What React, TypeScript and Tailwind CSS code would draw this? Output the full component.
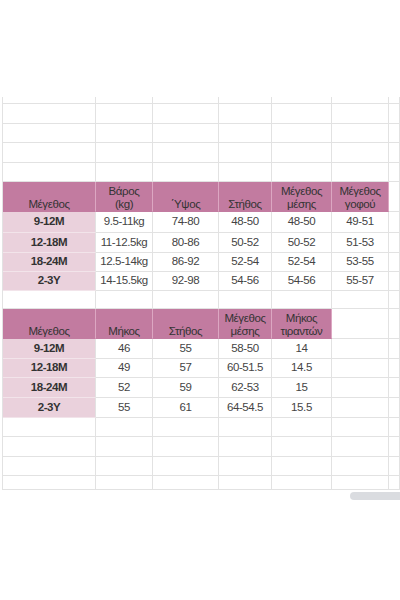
import React from 'react';

type Row = { h: number; kind: 'blank' | 'head' | 'data'; cells?: string[] };

// widths of the visible columns (x: 0,3,96,153,219,272,332,389,400)
const COLS = 'grid-cols-[3px_93px_57px_66px_53px_60px_57px_11px]';

const ROWS: Row[] = [
    { h: 7, kind: 'blank' },
    { h: 20, kind: 'blank' },
    { h: 19, kind: 'blank' },
    { h: 20, kind: 'blank' },
    { h: 19, kind: 'blank' },
    { h: 30, kind: 'head', cells: ['Μέγεθος', 'Βάρος\n(kg)', '΄Υψος', 'Στήθος', 'Μέγεθος\nμέσης', 'Μέγεθος\nγοφού'] },
    { h: 21, kind: 'data', cells: ['9-12M', '9.5-11kg', '74-80', '48-50', '48-50', '49-51'] },
    { h: 20, kind: 'data', cells: ['12-18M', '11-12.5kg', '80-86', '50-52', '50-52', '51-53'] },
    { h: 19, kind: 'data', cells: ['18-24M', '12.5-14kg', '86-92', '52-54', '52-54', '53-55'] },
    { h: 19, kind: 'data', cells: ['2-3Y', '14-15.5kg', '92-98', '54-56', '54-56', '55-57'] },
    { h: 18, kind: 'blank' },
    { h: 30, kind: 'head', cells: ['Μέγεθος', 'Μήκος', 'Στήθος', 'Μέγεθος\nμέσης', 'Μήκος\nτιραντών'] },
    { h: 20, kind: 'data', cells: ['9-12M', '46', '55', '58-50', '14'] },
    { h: 19, kind: 'data', cells: ['12-18M', '49', '57', '60-51.5', '14.5'] },
    { h: 20, kind: 'data', cells: ['18-24M', '52', '59', '62-53', '15'] },
    { h: 20, kind: 'data', cells: ['2-3Y', '55', '61', '64-54.5', '15.5'] },
    { h: 19, kind: 'blank' },
    { h: 20, kind: 'blank' },
    { h: 19, kind: 'blank' },
    { h: 14, kind: 'blank' },
];

function Cell({ kind, text, first }: { kind: 'blank' | 'head' | 'data'; text?: string; first?: boolean }) {
    if (kind === 'head' && text !== undefined) {
        return (
            <div className="flex items-end justify-center border-r border-b border-r-[#dca7c2] border-b-[#c27ba0] bg-[#c27ba0] text-center leading-[13px] whitespace-pre text-[#333]">
                {text}
            </div>
        );
    }
    if (kind === 'data' && text !== undefined) {
        if (first) {
            return (
                <div className="flex items-center justify-center border-r border-b border-r-[#e2e2e2] border-b-[#f2e4ea] bg-[#ead1dc] font-bold text-[#333]">
                    {text}
                </div>
            );
        }
        return (
            <div className="flex items-center justify-center border-r border-b border-[#e2e2e2] text-[#444]">
                {text}
            </div>
        );
    }
    return <div className="border-r border-b border-[#e2e2e2]" />;
}

export default function App() {
    return (
        <div className="h-[600px] w-[400px] overflow-hidden bg-white pt-[97px] font-['Liberation_Sans',Arial,sans-serif] text-[11.5px] tracking-[-0.4px]">
            {ROWS.map((row, i) => {
                const cells: React.ReactNode[] = [<div key="m" className="border-r border-[#e2e2e2]" />];
                for (let c = 0; c < 7; c++) {
                    const text = row.cells && c < row.cells.length ? row.cells[c] : undefined;
                    cells.push(<Cell key={c} kind={row.kind} text={text} first={c === 0} />);
                }
                return (
                    <div key={i} className={`grid ${COLS}`} style={{ height: row.h }}>
                        {cells}
                    </div>
                );
            })}

            {/* horizontal scrollbar */}
            <div className="mt-[2px] ml-[350px] h-[8px] w-[50px] rounded-l-full bg-[#dadce0]" />
        </div>
    );
}
